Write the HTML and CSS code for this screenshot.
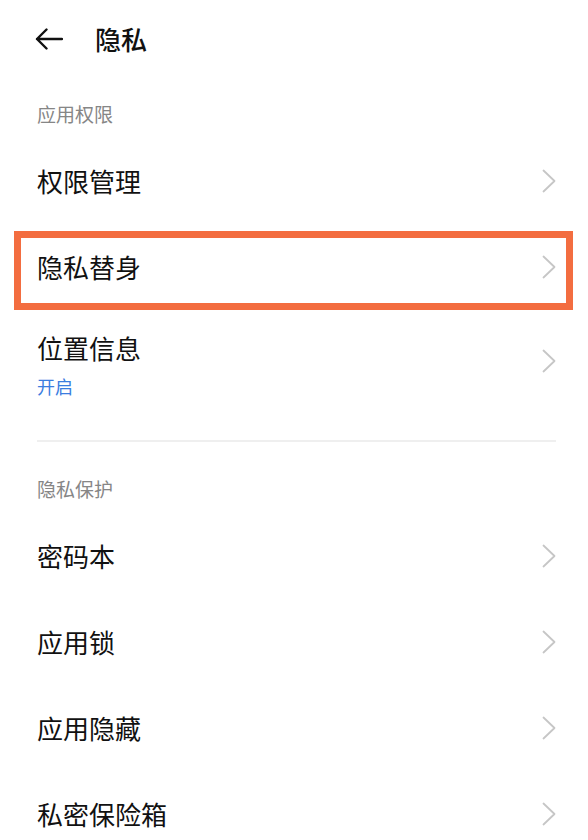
FILE: index.html
```html
<!DOCTYPE html>
<html lang="zh-CN">
<head>
<meta charset="utf-8">
<title>隐私</title>
<link rel="stylesheet" href="styles.css">
</head>
<body>
<div class="page">
  <header class="nav">
    <svg class="back" width="28" height="22" viewBox="0 0 28 22"><path d="M27 11H2M11.5 1.5L2 11l9.5 9.5" fill="none" stroke="#111" stroke-width="2.4" stroke-linecap="round" stroke-linejoin="round"/></svg>
    <h1 class="title">隐私</h1>
  </header>

  <div class="section-title first">应用权限</div>
  <div class="row"><span class="label">权限管理</span><svg class="chev" width="14" height="24" viewBox="0 0 14 24"><path d="M1.5 1.5L12.5 12 1.5 22.5" fill="none" stroke="#c6c6c6" stroke-width="1.8" stroke-linecap="round" stroke-linejoin="round"/></svg></div>
  <div class="row highlighted"><span class="label">隐私替身</span><svg class="chev" width="14" height="24" viewBox="0 0 14 24"><path d="M1.5 1.5L12.5 12 1.5 22.5" fill="none" stroke="#c6c6c6" stroke-width="1.8" stroke-linecap="round" stroke-linejoin="round"/></svg><span class="mark"></span></div>
  <div class="row two-line"><div class="texts"><span class="label">位置信息</span><span class="sub">开启</span></div><svg class="chev" width="14" height="24" viewBox="0 0 14 24"><path d="M1.5 1.5L12.5 12 1.5 22.5" fill="none" stroke="#c6c6c6" stroke-width="1.8" stroke-linecap="round" stroke-linejoin="round"/></svg></div>

  <div class="divider"></div>

  <div class="section-title second">隐私保护</div>
  <div class="row"><span class="label">密码本</span><svg class="chev" width="14" height="24" viewBox="0 0 14 24"><path d="M1.5 1.5L12.5 12 1.5 22.5" fill="none" stroke="#c6c6c6" stroke-width="1.8" stroke-linecap="round" stroke-linejoin="round"/></svg></div>
  <div class="row"><span class="label">应用锁</span><svg class="chev" width="14" height="24" viewBox="0 0 14 24"><path d="M1.5 1.5L12.5 12 1.5 22.5" fill="none" stroke="#c6c6c6" stroke-width="1.8" stroke-linecap="round" stroke-linejoin="round"/></svg></div>
  <div class="row"><span class="label">应用隐藏</span><svg class="chev" width="14" height="24" viewBox="0 0 14 24"><path d="M1.5 1.5L12.5 12 1.5 22.5" fill="none" stroke="#c6c6c6" stroke-width="1.8" stroke-linecap="round" stroke-linejoin="round"/></svg></div>
  <div class="row"><span class="label">私密保险箱</span><svg class="chev" width="14" height="24" viewBox="0 0 14 24"><path d="M1.5 1.5L12.5 12 1.5 22.5" fill="none" stroke="#c6c6c6" stroke-width="1.8" stroke-linecap="round" stroke-linejoin="round"/></svg></div>
</div>
</body>
</html>
```

FILE: styles.css
```css
* { box-sizing: border-box; }
html, body { margin: 0; padding: 0; background: #fff; }
body {
  font-family: "Noto Sans CJK SC", "Noto Sans", sans-serif;
  color: #111;
  overflow: hidden;
}
.page { width: 588px; }

.nav {
  height: 78px;
  display: flex;
  align-items: center;
  padding-left: 35px;
}
.back { display: block; margin-top: 0; }
.title {
  margin: 0 0 0 32px;
  font-size: 26px;
  font-weight: 500;
  line-height: 34px;
}

.section-title {
  font-size: 19px;
  line-height: 20px;
  color: #868686;
  padding: 0 37px 14px;
}
.section-title.first { padding-top: 26px; }
.section-title.second { padding-top: 37px; }

.row {
  position: relative;
  height: 86px;
  display: flex;
  align-items: center;
  justify-content: space-between;
  padding: 0 32px 0 37px;
}
.label {
  font-size: 26px;
  line-height: 36px;
  color: #111;
}
.chev { display: block; flex: none; }

.row.two-line {
  height: 106px;
  padding-top: 20px;
  padding-bottom: 18px;
}
.texts { display: flex; flex-direction: column; }
.sub {
  margin-top: 8px;
  font-size: 18px;
  line-height: 24px;
  color: #3b7ddf;
}
.row.two-line .chev { margin-top: -6px; }

.divider {
  height: 2px;
  background: #efefef;
  margin: 24px 32px 0 37px;
}

.mark {
  position: absolute;
  top: 7px;
  left: 14px;
  right: 15px;
  bottom: 0;
  border: 7px solid #f36d40;
  pointer-events: none;
}
```
